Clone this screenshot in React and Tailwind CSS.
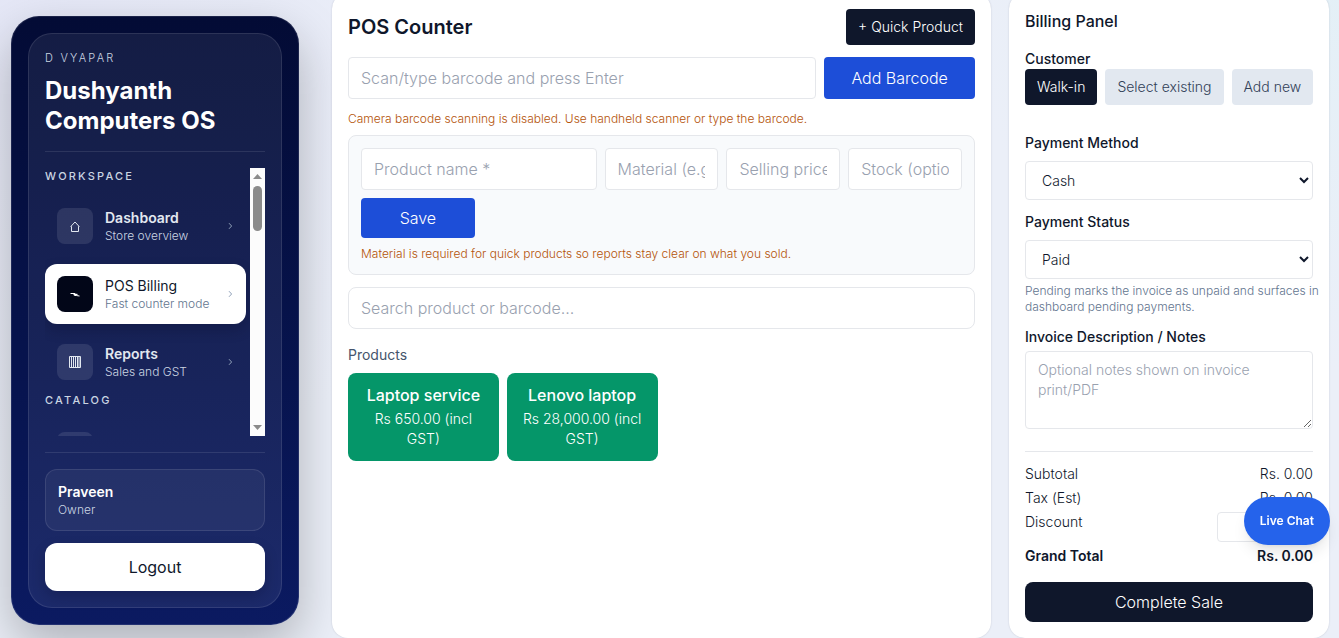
import { useState } from 'react';
import clsx from 'clsx';

const HomeGlyph = () => (
  <svg width="10" height="12" viewBox="0 0 10 12" fill="none" stroke="currentColor" strokeWidth="1" aria-hidden="true">
    <path d="M1.500 11.500V6.500H.8L5 2l4.200 4.500h-.7v5z" />
  </svg>
);

const BoltGlyph = () => (
  <svg width="10" height="6" viewBox="0 0 10 6" fill="none" stroke="currentColor" strokeWidth="1" aria-hidden="true">
    <path d="M.5 2.500h4.500L4.600 4.500h1.600l3.300.5" />
    <path d="M3.500 3.500h4" strokeWidth="1.400" />
  </svg>
);

const ReportGlyph = () => (
  <svg width="12" height="12" viewBox="0 0 12 12" fill="none" stroke="currentColor" strokeWidth="1" aria-hidden="true">
    <path d="M.5.5h11v11H.5zM2.500.5v11M4.500.5v11M6.500.5v11M8.500.5v11M10 .5v11" />
  </svg>
);

const workspaceLinks = [
  { title: 'Dashboard', hint: 'Store overview', Icon: HomeGlyph },
  { title: 'POS Billing', hint: 'Fast counter mode', Icon: BoltGlyph, active: true },
  { title: 'Reports', hint: 'Sales and GST', Icon: ReportGlyph },
];

const products = [
  { name: 'Laptop service', price: 'Rs 650.00 (incl GST)' },
  { name: 'Lenovo laptop', price: 'Rs 28,000.00 (incl GST)' },
];

const customerModes = ['Walk-in', 'Select existing', 'Add new'];

const inputClass =
  'w-full min-w-0 rounded border border-gray-200 bg-white px-3 py-2 text-base text-slate-900 placeholder:text-gray-400';

const NavLabel = ({ children }) => (
  <p className="text-[11px] leading-4 font-medium tracking-[0.2em] text-slate-300 uppercase">{children}</p>
);

const NavItem = ({ title, hint, Icon, active }) => (
  <a
    href="#"
    className={clsx(
      'flex items-center gap-3 rounded-xl p-3',
      active ? 'bg-white shadow-[0_6px_14px_rgba(2,6,23,0.2)]' : 'text-slate-200'
    )}
  >
    <span
      className={clsx(
        'flex size-9 shrink-0 items-center justify-center rounded-lg',
        active ? 'bg-slate-950 text-white' : 'bg-white/10 text-slate-200'
      )}
    >
      <Icon />
    </span>
    <span className="min-w-0 flex-1">
      <span className={clsx('block text-sm', active ? 'font-normal text-slate-900' : 'font-semibold')}>{title}</span>
      <span className={clsx('block text-xs', active ? 'text-slate-500' : 'text-slate-300')}>{hint}</span>
    </span>
    <svg width="6" height="8" viewBox="0 0 6 8" fill="none" stroke="currentColor" className="text-slate-400" aria-hidden="true">
      <path d="M1 1.200 3.600 4 1 6.800" />
    </svg>
  </a>
);

const ScrollRail = () => (
  <div className="flex w-[15px] shrink-0 flex-col items-center justify-between bg-[#fcfcfc] py-1.5" aria-hidden="true">
    <div className="flex flex-col items-center gap-[7px]">
      <svg width="9" height="5" viewBox="0 0 9 5" fill="#8b8b8b">
        <path d="M4.500 0 9 5H0z" />
      </svg>
      <div className="h-[45px] w-[9px] rounded-full bg-[#8b8b8b]" />
    </div>
    <svg width="9" height="5" viewBox="0 0 9 5" fill="#8b8b8b">
      <path d="M0 0h9L4.500 5z" />
    </svg>
  </div>
);

const Sidebar = () => (
  <aside className="mt-4 flex h-[calc(100vh-29px)] w-72 shrink-0 rounded-[28px] border border-white/10 bg-linear-to-b from-[#030b35] to-[#0b1a61] bg-origin-border p-4 shadow-[0_20px_50px_rgba(0,0,0,0.26)]">
    <div className="flex min-w-0 flex-1 flex-col rounded-3xl border border-white/10 bg-white/7 p-4">
      <div className="border-b border-white/10 pb-[15px]">
        <p className="text-[11px] leading-4 tracking-[0.2em] text-slate-300 uppercase">D Vyapar</p>
        <h1 className="mt-2.5 text-2xl leading-[30px] font-bold text-white">Dushyanth Computers OS</h1>
      </div>

      <div className="mt-4 flex min-h-0 flex-1">
        <nav className="min-w-0 flex-1 overflow-hidden pr-1">
          <NavLabel>Workspace</NavLabel>
          <div className="mt-3 flex flex-col gap-2">
            {workspaceLinks.map((link) => (
              <NavItem key={link.title} {...link} />
            ))}
          </div>
          <NavLabel>Catalog</NavLabel>
          <div className="mt-3 p-3">
            <div className="size-9 rounded-lg bg-white/10" />
          </div>
        </nav>
        <ScrollRail />
      </div>

      <div className="mt-4 border-t border-white/10 pt-4">
        <div className="rounded-xl border border-white/10 bg-white/5 p-3">
          <p className="text-sm font-semibold text-white">Praveen</p>
          <p className="text-xs text-slate-300">Owner</p>
        </div>
        <button className="mt-3 h-12 w-full rounded-xl bg-white text-base font-normal text-slate-900 shadow-[0_6px_14px_rgba(2,6,23,0.2)]">
          Logout
        </button>
      </div>
    </div>
  </aside>
);

const Counter = () => (
  <main className="min-w-0 flex-1 rounded-2xl bg-white p-4 shadow-[0_0_2px_rgba(15,23,42,0.15)]">
    <div className="flex items-center justify-between">
      <h2 className="text-xl font-semibold text-slate-900">POS Counter</h2>
      <button className="rounded bg-slate-900 px-3 py-2 text-sm text-white">+ Quick Product</button>
    </div>

    <div className="mt-3 grid grid-cols-4 gap-2">
      <input className={clsx(inputClass, 'col-span-3')} placeholder="Scan/type barcode and press Enter" aria-label="Barcode" />
      <button className="rounded bg-[#1d4ed8] text-base text-white">Add Barcode</button>
    </div>
    <p className="mt-3 text-xs text-[#b45309]">
      Camera barcode scanning is disabled. Use handheld scanner or type the barcode.
    </p>

    <div className="mt-2 rounded-lg border border-gray-200 bg-slate-50 p-3">
      <div className="grid grid-cols-5 gap-2">
        <input className={clsx(inputClass, 'col-span-2')} placeholder="Product name *" aria-label="Product name" />
        <input className={inputClass} placeholder="Material (e.g. plastic)" aria-label="Material" />
        <input className={inputClass} placeholder="Selling price *" aria-label="Selling price" />
        <input className={inputClass} placeholder="Stock (optional)" aria-label="Stock" />
        <button className="rounded bg-[#1d4ed8] py-2 text-base text-white">Save</button>
      </div>
      <p className="mt-2 text-xs text-[#b45309]">
        Material is required for quick products so reports stay clear on what you sold.
      </p>
    </div>

    <input
      className="mt-3 w-full rounded-lg border border-gray-200 bg-white px-3 py-2 text-base placeholder:text-gray-400"
      placeholder="Search product or barcode..."
      aria-label="Search products"
    />

    <h3 className="mt-4 text-sm font-normal text-slate-600">Products</h3>
    <div className="mt-2 grid grid-cols-4 gap-2">
      {products.map((product) => (
        <button key={product.name} className="rounded-lg bg-[#059669] px-3 pt-2.5 pb-3 text-white">
          <span className="block text-base font-medium">{product.name}</span>
          <span className="mt-0.5 block text-sm">{product.price}</span>
        </button>
      ))}
    </div>
  </main>
);

const BillingPanel = () => {
  const [mode, setMode] = useState('Walk-in');

  return (
    <section className="w-80 shrink-0 rounded-2xl bg-white p-4 text-sm text-slate-900 shadow-[0_0_2px_rgba(15,23,42,0.15)]">
      <h2 className="text-base font-medium">Billing Panel</h2>

      <p className="mt-4 font-medium">Customer</p>
      <div className="flex gap-2">
        {customerModes.map((item) => (
          <button
            key={item}
            onClick={() => setMode(item)}
            className={clsx(
              'rounded px-3 py-2 whitespace-nowrap',
              mode === item ? 'bg-slate-900 text-white' : 'bg-slate-200 text-slate-700'
            )}
          >
            {item}
          </button>
        ))}
      </div>

      <label htmlFor="method" className="mt-7 block font-medium">Payment Method</label>
      <select id="method" className="mt-2 h-[39px] w-full rounded border border-gray-200 bg-white px-3">
        <option>Cash</option>
        <option>UPI</option>
        <option>Card</option>
      </select>

      <label htmlFor="status" className="mt-3 block font-medium">Payment Status</label>
      <select id="status" className="mt-2 h-[39px] w-full rounded border border-gray-200 bg-white px-3">
        <option>Paid</option>
        <option>Pending</option>
      </select>
      <p className="mt-1 -mr-3 text-xs text-slate-500">
        Pending marks the invoice as unpaid and surfaces in dashboard pending payments.
      </p>

      <label htmlFor="notes" className="mt-3 block font-medium">Invoice Description / Notes</label>
      <textarea
        id="notes"
        rows={3}
        className="mt-1 block w-full rounded border border-gray-200 bg-white px-3 py-2 placeholder:text-gray-400"
        placeholder="Optional notes shown on invoice print/PDF"
      />

      <div className="mt-[22px] border-t border-gray-200 pt-3">
        <div className="flex justify-between">
          <span>Subtotal</span>
          <span>Rs. 0.00</span>
        </div>
        <div className="mt-1 flex justify-between">
          <span>Tax (Est)</span>
          <span>Rs. 0.00</span>
        </div>
        <div className="mt-1 flex items-start justify-between">
          <label htmlFor="discount">Discount</label>
          <input id="discount" className="h-[30px] w-24 rounded border border-gray-200 px-2 text-right" />
        </div>
        <div className="mt-1 flex justify-between font-semibold">
          <span>Grand Total</span>
          <span>Rs. 0.00</span>
        </div>
      </div>

      <button className="mt-4 h-10 w-full rounded-lg bg-slate-900 text-base text-white">Complete Sale</button>
    </section>
  );
};

export default function App() {
  return (
    <div className="flex min-h-screen items-start overflow-hidden bg-[#ebeff8] bg-[radial-gradient(circle_at_0%_0%,rgba(220,220,245,0.4),transparent_35%),radial-gradient(circle_at_100%_0%,rgba(225,240,246,0.7),transparent_25%)] pr-2.5 pl-[11px] font-[Inter,sans-serif] font-light">
      <Sidebar />
      <div className="-mt-[7px] ml-[33px] flex min-w-0 flex-1 gap-[18px]">
        <Counter />
        <BillingPanel />
      </div>

      <button className="fixed right-[9px] bottom-[93px] h-12 rounded-full bg-[#2563eb] px-4 text-xs font-semibold text-white shadow-lg">
        Live Chat
      </button>
    </div>
  );
}
